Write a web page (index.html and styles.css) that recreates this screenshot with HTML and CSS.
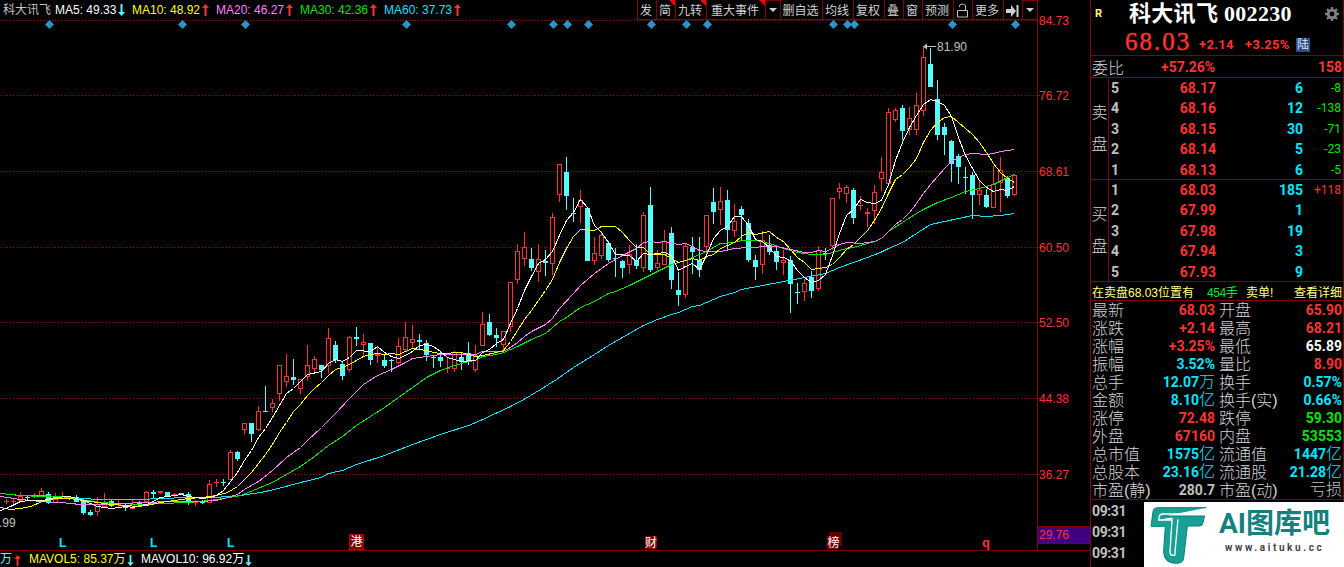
FILE: index.html
```html
<!DOCTYPE html>
<html lang="zh-CN">
<head>
<meta charset="utf-8">
<title>科大讯飞 002230</title>
<link rel="stylesheet" href="styles.css">
</head>
<body>

<svg class="defs" width="0" height="0">
	<symbol id="up" viewBox="0 0 7 12"><path d="M3.5 0L7 4H4.5V12H2.5V4H0z" fill="#ff3232"/></symbol>
	<symbol id="down" viewBox="0 0 7 12"><path d="M3.5 12L7 8H4.5V0H2.5V8H0z" fill="#54fcfc"/></symbol>
</svg>

<div class="app">
	<div class="left">
		<div class="chartBox">
			<svg id="chart" width="1090" height="551"></svg>
			<div class="topBar">
				<div class="maList">
					<span class="stock">科大讯飞</span>
					<span class="ma ma5">MA5: 49.33<svg class="arrow"><use href="#down"/></svg></span>
					<span class="ma ma10">MA10: 48.92<svg class="arrow"><use href="#up"/></svg></span>
					<span class="ma ma20">MA20: 46.27<svg class="arrow"><use href="#up"/></svg></span>
					<span class="ma ma30">MA30: 42.36<svg class="arrow"><use href="#up"/></svg></span>
					<span class="ma ma60">MA60: 37.73<svg class="arrow"><use href="#up"/></svg></span>
				</div>
				<div class="tools">
					<span class="w1">发</span>
					<span class="w1 hot">简</span>
					<span class="w2 hot">九转</span>
					<span class="w4 hot">重大事件</span>
					<span class="drop"><svg width="8" height="4"><path d="M0 0H8L4 4z"/></svg></span>
					<span class="w3">删自选</span>
					<span class="w2">均线</span>
					<span class="w2">复权</span>
					<span class="w1">叠</span>
					<span class="w1">窗</span>
					<span class="w2">预测</span>
					<span class="w1"><svg class="line" width="13" height="15"><path d="M1.5 7.5H11.5V14H1.5zM3.5 4V3Q3.5 1 6.5 1Q9.5 1 9.5 3V7"/></svg></span>
					<span class="w2">更多</span>
					<span class="w1"><svg width="13" height="12"><path d="M0 4H5V0L10 6L5 12V8H0zM10.5 0H12.5V12H10.5z"/></svg></span>
					<span class="drop last"><svg width="8" height="4"><path d="M0 0H8L4 4z"/></svg></span>
				</div>
			</div>
		</div>
		<div class="volBar">
			<span class="vol v0">万<svg class="arrow"><use href="#up"/></svg></span>
			<span class="vol v5">MAVOL5: 85.37万<svg class="arrow"><use href="#down"/></svg></span>
			<span class="vol v10">MAVOL10: 96.92万<svg class="arrow"><use href="#down"/></svg></span>
		</div>
	</div>

	<div class="right">
		<div class="head">
			<div class="title">
				<b class="r">R</b>
				<span class="name">科大讯飞 002230</span>
				<svg class="gear" width="14" height="14" viewBox="-7 -7 14 14">
					<circle r="3.8" fill="none" stroke="#808080" stroke-width="2.8"/>
					<path d="M0-7V-4M0 7V4M-7 0H-4M7 0H4M-5-5L-3-3M5 5L3 3M-5 5L-3 3M5-5L3-3" stroke="#808080" stroke-width="2.4"/>
				</svg>
			</div>
			<div class="price red"><span class="now">68.03</span><span class="chg">+2.14</span><span class="pct">+3.25%</span><i>陆</i></div>
		</div>
		<div class="ratio"><label>委比</label><b class="red">+57.26%</b><b class="red end">158</b></div>
		<div class="book">
			<div class="side"><span>卖</span><span>盘</span></div>
			<div class="rows">
				<div class="row"><b>5</b><b class="red">68.17</b><b class="cyan">6</b><em class="green">-8</em></div>
				<div class="row"><b>4</b><b class="red">68.16</b><b class="cyan">12</b><em class="green">-138</em></div>
				<div class="row"><b>3</b><b class="red">68.15</b><b class="cyan">30</b><em class="green">-71</em></div>
				<div class="row"><b>2</b><b class="red">68.14</b><b class="cyan">5</b><em class="green">-23</em></div>
				<div class="row"><b>1</b><b class="red">68.13</b><b class="cyan">6</b><em class="green">-5</em></div>
			</div>
		</div>
		<div class="book">
			<div class="side"><span>买</span><span>盘</span></div>
			<div class="rows">
				<div class="row"><b>1</b><b class="red">68.03</b><b class="cyan">185</b><em class="red">+118</em></div>
				<div class="row"><b>2</b><b class="red">67.99</b><b class="cyan">1</b><em></em></div>
				<div class="row"><b>3</b><b class="red">67.98</b><b class="cyan">19</b><em></em></div>
				<div class="row"><b>4</b><b class="red">67.94</b><b class="cyan">3</b><em></em></div>
				<div class="row"><b>5</b><b class="red">67.93</b><b class="cyan">9</b><em></em></div>
			</div>
		</div>
		<div class="tip"><span class="t1">在卖盘68.03位置有</span><span class="t2">454手</span><span>卖单!</span><span class="t4">查看详细</span></div>
		<div class="info">
			<label>最新</label><b class="red">68.03</b><label>开盘</label><b class="red">65.90</b>
			<label>涨跌</label><b class="red">+2.14</b><label>最高</label><b class="red">68.21</b>
			<label>涨幅</label><b class="red">+3.25%</b><label>最低</label><b class="white">65.89</b>
			<label>振幅</label><b class="cyan">3.52%</b><label>量比</label><b class="red">8.90</b>
			<label>总手</label><b class="cyan">12.07<u>万</u></b><label>换手</label><b class="cyan">0.57%</b>
			<label>金额</label><b class="cyan">8.10<u>亿</u></b><label>换手(实)</label><b class="cyan">0.66%</b>
			<label>涨停</label><b class="red">72.48</b><label>跌停</label><b class="green">59.30</b>
			<label>外盘</label><b class="red">67160</b><label>内盘</label><b class="green">53553</b>
			<label>总市值</label><b class="cyan">1575<u>亿</u></b><label>流通值</label><b class="cyan">1447<u>亿</u></b>
			<label>总股本</label><b class="cyan">23.16<u>亿</u></b><label>流通股</label><b class="cyan">21.28<u>亿</u></b>
			<label>市盈(静)</label><b>280.7</b><label>市盈(动)</label><b><u>亏损</u></b>
		</div>
		<div class="deals">
			<div class="times"><b>09:31</b><b>09:31</b><b>09:31</b></div>
			<div class="logo">
				<svg width="66" height="65" viewBox="0 0 198 195">
					<path d="M188 17H40Q28 17 27 29L21 73H64L59 145Q58 165 66 174Q76 186 97 184H104Q117 183 119 168L130 72H166Q176 72 177 62L182 42H64" fill="#18a094"/>
					<path d="M188 17H40Q28 17 27 29L21 73H64L59 145Q58 182 97 184Q117 184 119 168L130 72H166Q176 72 177 62L182 42H64" fill="none" stroke="#0b7f78" stroke-width="3"/>
					<path d="M188 36H56Q47 36 46 43L44 54H84L78 150Q78 162 92 160L102 52" fill="none" stroke="#fff" stroke-width="4"/>
					<path d="M55 53Q72 45 90 48Q76 56 55 53z" fill="#fff"/>
				</svg>
				<div class="logoText">
					<strong>AI图库吧</strong>
					<span>www.aituku.cc</span>
				</div>
			</div>
		</div>
	</div>
</div>

<script type="text/javascript" src="chart.js"></script>
</body>
</html>
```
FILE: styles.css
```css
* {margin:0; padding:0; box-sizing:border-box;}

body {background:#000; color:#c0c0c0; font:12px "Liberation Sans", "Noto Sans CJK SC", sans-serif; overflow:hidden;}
svg {display:block;}
.defs {position:absolute;}
label, em, i, u {font-style:normal; text-decoration:none;}

.red {color:#ff3232;}
.green {color:#00e600;}
.cyan {color:#00e6ff;}
.white {color:#fff;}

.app {display:flex; width:1344px; height:567px;}
.left {width:1090px;}

/* chart */
.chartBox {position:relative; height:551px;}
.topBar {position:absolute; left:0; top:0; width:1038px; height:20px; display:flex; justify-content:space-between;}
.maList {display:flex; padding-left:3px; line-height:20px;}
.stock {width:52px;}
.ma {display:flex; align-items:center; justify-content:space-between; width:84px; padding-right:7px; white-space:nowrap;}
.ma5 {width:77px; color:#fff;}
.ma10 {color:#ff0;}
.ma20 {color:#ff80ff;}
.ma30 {color:#00e600;}
.ma60 {color:#00e6ff;}
.arrow {width:7px; height:12px; flex:none;}

.tools {display:flex; height:20px; border-bottom:1px solid #800000; color:#d0d0d0;}
.tools span {border-left:1px solid #800000; height:19px; line-height:18px; display:flex; align-items:center; justify-content:center; position:relative; white-space:nowrap; padding:2px 2px 0 0;}
.tools svg {fill:#d0d0d0; margin-right:-1px;}
.tools .line {fill:none; stroke:#c0c0c0;}
.tools .w1 {width:19px;}
.tools .w2 {width:31px;}
.tools .w3 {width:42px;}
.tools .w4 {width:59px;}
.tools .drop {width:15px; border-top:1px solid #800000; padding-top:0;}
.tools .last {width:16px; border-right:1px solid #800000;}
.tools .hot:after {content:""; position:absolute; right:0; top:0; border:3px solid; border-color:#f00 #f00 transparent transparent;}

#chart text {font-size:12px; fill:#ff3232;}

.volBar {display:flex; height:16px; line-height:19px; white-space:nowrap;}
.vol {display:flex; align-items:center; gap:1px;}
.vol .arrow {margin-top:2px; height:11px;}
.v0 {width:29px; gap:2px; color:#54fcfc;}
.v5 {width:112px; color:#ff0;}
.v10 {color:#fff;}

/* quote panel */
.right {width:254px; border-left:1px solid #800000; border-right:1px solid #800000;}
.right b {font-family:Roboto, "Noto Sans CJK SC", sans-serif; font-size:14px;}
.right label, .right u, .side {font:300 16px "Liberation Sans", "Noto Sans CJK SC", sans-serif;}
.right label, .side {color:#d4d4d4;}

.head {height:56px; border-bottom:1px solid #800000;}
.title {display:flex; align-items:center; height:27px; padding:0 4px;}
.right .r {font-size:11px; color:#ffff80; width:34px;}
.name {flex:1; color:#fff; font:bold 22px/27px "Liberation Serif", "Noto Sans CJK SC", serif; letter-spacing:.3px; white-space:nowrap;}
.price {display:flex; align-items:center; height:29px; padding-left:34px; font:bold 13px Roboto, sans-serif;}
.now {font:25px "Liberation Serif", serif; letter-spacing:2px; width:74px; -webkit-text-stroke:.5px;}
.chg {width:46px; padding-top:6px; letter-spacing:.3px;}
.pct {width:51px; padding-top:6px; letter-spacing:.3px;}
.price i {background:#284c96; color:#e0e0e0; font:12px/14px "Liberation Sans", "Noto Sans CJK SC", sans-serif; width:14px; height:14px; text-align:center; margin-top:6px;}

.ratio {display:flex; align-items:center; height:22px; border-bottom:1px solid #800000; padding:0 1px;}
.ratio label {width:69px;}
.end {margin-left:auto;}

.book {display:flex; height:102px; border-bottom:1px solid #800000;}
.side {width:18px; border-right:1px solid #800000; display:flex; flex-direction:column; align-items:center; padding-top:19px;}
.side span {line-height:32px;}
.rows {flex:1; display:grid; grid-template-rows:20px 20px 21px 20px 21px;}
.row {display:grid; grid-template-columns:15px 92px 87px 1fr; align-items:center; text-align:right; padding:0 2px 0 0;}
.row b {line-height:16px;}
.row b:first-child {text-align:left; padding-left:2px;}
.row em {font:12px Roboto, sans-serif;}

.tip {display:flex; align-items:center; height:19px; border-bottom:1px solid #800000; color:#ffff80; padding:0 1px; white-space:nowrap;}
.t1 {width:115px;}
.t2 {width:39px; color:#00e632; letter-spacing:-.4px;}
.t4 {margin-left:auto;}

.info {display:grid; grid-template-columns:48px 75px 67px 1fr; grid-auto-rows:18px; height:199px; padding:0 1px; border-bottom:1px solid #800000;}
.info label {line-height:20px; white-space:nowrap;}
.info label:nth-child(4n+3) {padding-left:4px;}
.info b {text-align:right; line-height:19px; white-space:nowrap;}
.info u {line-height:16px;}

.deals {display:flex; height:67px;}
.times {width:53px; padding:1px 0 0 1px; display:flex; flex-direction:column;}
.times b {line-height:21px; height:21px; letter-spacing:-.4px;}
.logo {width:200px; height:65px; margin:2px -1px 0 0; background:#fff; display:flex; flex:none;}
.logoText {padding:5px 0 0 9px;}
.logoText strong {display:block; font:bold 28px/34px Roboto, "Noto Sans CJK SC", sans-serif; color:#15807f; white-space:nowrap;}
.logoText span {display:block; font:bold 10px/14px Roboto, sans-serif; letter-spacing:2.6px; color:#444; padding-left:6px;}
```
FILE: chart.js
```js
var svg = document.getElementById('chart'),
	NS = 'http://www.w3.org/2000/svg';

// high, body top, body bottom, low, up(1)/down(0)
var candles = [
	[499,501,501,503,1],[499,501,501,503,1],[492,496,500,500,1],[495,497,497,499,0],[493,496,496,497,1],[488,491,495,495,1],[492,494,502,503,0],[493,499,502,502,1],[492,496,496,497,1],[496,497,497,499,0],
	[495,497,501,501,0],[500,501,512,514,0],[510,512,514,515,0],[497,504,511,515,1],[493,503,506,506,1],[499,501,505,506,0],[500,504,504,506,1],[504,505,507,510,0],[499,504,508,508,1],[501,502,504,505,0],
	[491,492,501,501,1],[490,492,493,497,0],[491,491,492,493,1],[492,492,495,496,0],[493,494,494,496,1],[493,493,494,494,0],[492,494,502,504,0],[500,501,502,505,1],[500,502,502,503,0],[480,484,502,502,1],
	[479,482,482,486,1],[479,482,482,485,0],[450,452,479,479,1],[451,452,458,460,0],[423,423,429,433,1],[423,423,433,441,0],[406,411,429,430,1],[386,411,411,411,0],[399,403,407,411,1],[365,365,393,400,1],
	[354,376,381,386,1],[359,377,379,384,0],[379,379,388,393,1],[345,365,376,380,1],[356,359,368,373,1],[365,365,369,377,0],[328,338,365,372,1],[341,345,359,362,0],[361,364,375,379,0],[336,337,369,371,1],
	[327,337,338,345,0],[334,342,344,355,1],[343,343,359,364,0],[347,354,355,362,1],[355,360,365,367,0],[359,360,360,371,0],[338,346,362,363,1],[322,337,349,351,1],[325,339,342,348,1],[334,340,341,348,0],
	[340,343,354,360,0],[356,357,357,367,0],[351,357,360,366,0],[357,368,368,372,1],[351,352,368,371,1],[353,357,361,369,0],[342,353,360,364,0],[345,355,369,371,1],[312,324,345,345,1],[314,322,334,335,0],
	[328,335,337,346,0],[331,331,344,349,1],[282,282,326,331,1],[244,251,279,283,1],[232,247,258,265,1],[248,259,267,270,0],[244,259,271,281,1],[250,261,262,275,0],[213,217,263,274,1],[164,164,194,201,1],
	[157,172,195,209,0],[198,213,213,221,0],[190,200,206,222,1],[208,208,260,260,0],[237,253,260,264,1],[231,235,255,258,1],[241,243,259,261,0],[248,258,258,276,0],[260,261,267,277,0],[245,254,264,273,1],
	[244,260,265,268,0],[212,215,267,271,1],[187,205,269,271,0],[250,263,267,269,1],[230,241,264,264,1],[227,233,279,288,0],[272,290,294,305,0],[243,246,294,297,1],[237,247,251,273,0],[237,260,269,276,0],
	[215,215,246,257,1],[188,202,211,223,0],[187,201,209,224,1],[190,200,229,250,0],[204,221,230,236,1],[206,209,214,239,0],[219,223,259,261,0],[255,260,266,279,0],[231,240,264,273,1],[235,245,251,254,0],
	[246,251,261,269,0],[250,260,262,274,1],[256,260,283,312,0],[283,292,292,303,0],[279,283,291,300,1],[271,277,290,297,0],[246,250,288,290,1],[248,253,253,259,0],[198,198,245,249,1],[183,188,191,198,1],
	[185,187,193,202,1],[188,190,217,223,0],[196,205,205,209,1],[208,212,213,226,1],[185,192,210,223,1],[157,172,178,190,1],[108,112,183,185,1],[108,110,119,121,1],[105,108,130,139,0],[107,118,129,134,1],
	[93,105,129,134,1],[47,57,110,115,1],[48,64,86,86,0],[80,99,134,139,0],[123,127,134,154,0],[140,141,163,181,0],[154,156,166,183,0],[167,177,177,193,0],[172,175,194,218,0],[181,190,194,204,1],
	[189,195,206,207,0],[166,184,207,207,1],[157,170,182,211,1],[176,178,195,197,0],[174,175,194,195,1]
];

var lines = {
	'#00e6ff' : '0,493 20,495 40,495 60,496 80,498 100,499 140,499 160,498 187,497 209,497 233,496 260,492 274,489 300,482 321,477 328,473 342,470 356,464 384,455 412,444 440,434 468,425 480,420 495,413 510,406 525,398 540,389 556,379 573,367 594,354 608,345 629,333 643,325 657,319 671,314 678,312 692,306 699,305 720,296 734,292 741,289 762,285 783,281 804,277 825,273 839,267 853,262 867,257 880,252 888,248 902,242 916,233 930,224 944,221 958,218 972,215 986,216 1000,215 1014,213',
	'#00e600' : '0,493 20,495 40,496 60,496 80,499 100,502 120,503 140,504 160,503 187,502 209,500 223,498 240,495 255,489 272,482 286,474 300,466 314,456 328,445 342,436 356,425 370,416 384,407 398,397 412,387 426,377 440,370 454,365 468,361 475,360 482,356 496,354 503,352 517,346 531,339 545,333 559,321 566,317 580,307 594,301 608,293 615,291 629,285 643,278 657,271 671,264 685,260 699,254 706,251 720,243 734,242 741,240 755,240 769,243 783,248 797,252 811,254 825,254 839,250 846,248 853,247 860,245 874,241 881,238 888,231 902,222 916,213 923,209 937,202 951,197 965,191 979,188 993,184 1007,177 1014,174',
	'#ff80ff' : '0,496 20,499 40,501 60,502 80,504 100,504 120,503 146,502 167,501 200,501 216,500 227,497 237,494 244,489 258,481 272,470 286,457 300,447 307,440 321,427 335,413 349,398 363,384 377,375 391,369 405,362 412,358 426,356 440,354 475,354 482,351 503,351 510,347 517,342 524,336 531,331 545,324 552,318 559,308 573,293 580,285 594,273 608,263 622,255 636,248 643,242 650,241 657,242 664,241 678,244 685,243 692,246 699,250 706,251 720,251 734,248 748,247 769,246 776,246 790,249 804,252 811,252 818,250 825,251 832,248 839,244 846,242 860,243 874,241 881,238 888,231 895,224 902,219 909,212 916,203 923,193 930,184 944,168 951,161 958,157 965,154 972,153 986,154 993,153 1000,151 1014,149',
	'#ffff00' : '0,507 10,509 20,508 30,506 42,501 55,498 69,498 83,500 97,502 111,504 125,505 137,506 146,505 160,502 174,500 188,498 202,497 216,495 227,492 237,486 244,479 251,472 258,463 265,454 272,444 279,432 286,422 293,411 300,404 307,395 314,388 321,382 328,375 335,369 342,367 349,364 356,360 363,356 370,354 377,353 384,354 391,353 398,354 405,351 412,348 419,349 426,350 433,352 440,353 461,352 468,354 475,356 482,355 496,352 503,350 510,341 517,330 524,319 531,310 538,300 545,290 552,279 559,262 566,248 573,236 580,229 594,230 601,226 615,226 622,232 629,240 636,247 643,247 650,254 664,254 671,258 678,262 685,260 692,258 699,260 706,256 713,254 720,248 734,242 741,236 748,232 755,234 769,231 776,237 783,241 790,249 797,257 804,262 811,269 825,267 832,264 839,257 846,249 853,244 860,237 867,230 874,220 881,208 888,193 895,179 902,174 909,167 916,158 923,142 930,130 937,122 944,117 951,116 958,122 965,128 972,134 979,142 986,152 993,163 1000,172 1007,178 1014,182',
	'#ffffff' : '0,510 10,506 20,501 30,500 42,500 55,497 69,496 76,498 83,500 90,503 97,506 111,508 125,506 133,507 139,505 146,504 153,501 160,497 167,496 181,494 188,496 202,498 209,497 216,495 223,490 230,481 237,472 244,460 251,450 258,437 265,428 272,417 279,405 286,393 293,388 300,381 307,374 321,371 328,363 335,359 342,361 349,357 356,350 370,351 377,346 384,352 391,356 398,358 405,355 412,351 419,345 426,344 433,346 440,351 447,357 454,359 461,361 475,360 482,352 489,349 496,343 503,339 510,323 517,308 524,290 531,276 538,263 545,259 552,251 559,235 566,220 573,212 580,199 587,207 594,225 601,232 608,242 615,254 629,255 636,261 643,253 650,254 664,252 671,255 678,270 685,266 692,263 699,269 706,255 713,238 720,230 727,226 734,216 741,216 748,225 755,239 762,241 769,247 776,256 783,257 790,260 797,270 804,277 811,282 818,280 825,274 832,255 839,233 846,215 853,209 860,199 867,202 874,203 881,200 888,184 895,160 902,142 909,127 916,115 923,104 930,99 937,101 944,105 951,116 958,137 965,155 972,168 979,180 986,187 993,191 1000,189 1007,190 1014,186'
};

function add(tag, attrs, text) {
	var el = document.createElementNS(NS, tag);
	for (var k in attrs) el.setAttribute(k, attrs[k]);
	if (text) el.textContent = text;
	svg.appendChild(el);
}

function rect(x, y, w, h, fill) {
	add('rect', {x : x, y : y, width : w, height : h, fill : fill});
}

// grid and axis
var axis = {20 : '84.73', 95 : '76.72', 171 : '68.61', 247 : '60.50', 322 : '52.50', 398 : '44.38', 474 : '36.27'};
for (var y in axis) {
	add('path', {d : 'M1 ' + (+y + 0.5) + 'H1040', stroke : '#a00000', 'stroke-dasharray' : '1 2'});
	add('text', {x : 1039, y : +y + 5}, axis[y]);
}
rect(1037, 0, 1, 551, '#800000');
rect(0, 550, 1090, 1, '#800000');
rect(1038, 526, 52, 18, '#800000');
rect(1038, 527, 52, 16, '#400080');
add('text', {x : 1039, y : 539}, '29.76');

// candles, one every 7px
for (var i = 0; i < candles.length; i++) {
	var c = candles[i], x = 6 + i * 7, h = c[2] - c[1] + 1,
		color = c[4] ? '#ff3232' : '#54fcfc';
	rect(x, c[0], 1, c[3] - c[0] + 1, color);
	rect(x - 2, c[1], 5, h, color);
	if (c[4] && h > 2) rect(x - 1, c[1] + 1, 3, h - 2, '#000');
}

for (var k in lines) {
	add('polyline', {points : lines[k], fill : 'none', stroke : k, 'shape-rendering' : 'crispEdges', transform : 'translate(.5 .5)'});
}

// event marks
var marks = [49, 182, 245, 406, 511, 553, 567, 588, 651, 686, 707, 833, 847, 854, 952, 1015];
for (i = 0; i < marks.length; i++) {
	add('path', {d : 'M' + (marks[i] + 0.5) + ' 20l4.5 4.5l-4.5 4.5l-4.5 -4.5z', fill : '#2896c8'});
}

add('path', {d : 'M923 46.5l4 -3v2.5h9v1h-9v2.5z', fill : '#c0c0c0'});
add('text', {x : 937, y : 51, style : 'fill:#c0c0c0'}, '81.90');
add('text', {x : -1, y : 527, style : 'fill:#c0c0c0'}, '.99');

var L = [59, 150, 227];
for (i = 0; i < L.length; i++) {
	add('text', {x : L[i], y : 547, style : 'fill:#00e6ff;font-weight:bold'}, 'L');
}
add('text', {x : 982, y : 547, style : 'font-weight:bold;font-size:13px'}, 'q');

rect(349, 534, 15, 16, '#b00000');
rect(350, 535, 13, 14, '#800000');
add('text', {x : 350.5, y : 546, style : 'fill:#fff;font-size:12px'}, '港');
rect(645, 536, 12, 13, '#800000');
add('text', {x : 645, y : 547, style : 'fill:#fff'}, '财');
rect(829, 532, 13, 14, '#600000');
rect(827, 536, 12, 13, '#800000');
add('text', {x : 827.5, y : 547, style : 'fill:#fff'}, '榜');
```
